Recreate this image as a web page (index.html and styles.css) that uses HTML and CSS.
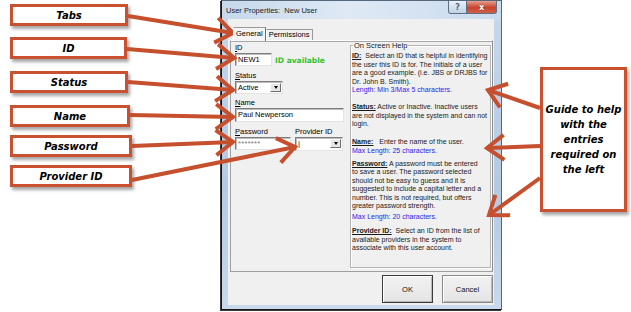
FILE: index.html
```html
<!DOCTYPE html>
<html lang="en">
<head>
    <meta charset="UTF-8">
    <title>User Properties</title>
    <link rel="stylesheet" href="styles.css">
</head>
<body>

    <div class="stage">

        <!-- Left call-outs -->
        <div class="callouts">
            <div class="callout c-tabs">Tabs</div>
            <div class="callout c-id">ID</div>
            <div class="callout c-status">Status</div>
            <div class="callout c-name">Name</div>
            <div class="callout c-pass">Password</div>
            <div class="callout c-prov">Provider ID</div>
        </div>

        <!-- The dialog -->
        <div class="window">
            <div class="titlebar">
                <span class="title">User Properties:&nbsp; New User</span>
                <div class="caption-btns">
                    <span class="cap-help">?</span>
                    <span class="cap-close">x</span>
                </div>
            </div>

            <div class="client">
                <div class="tabs">
                    <span class="tab active">General</span>
                    <span class="tab">Permissions</span>
                </div>

                <div class="panel">
                    <div class="form">
                        <div class="field">
                            <label><u>I</u>D</label>
                            <div class="row">
                                <div class="input id-input">NEW1</div>
                                <span class="avail">ID available</span>
                            </div>
                        </div>
                        <div class="field f-status">
                            <label><u>S</u>tatus</label>
                            <div class="select status-select">
                                <span class="value">Active</span>
                                <span class="drop"><i></i></span>
                            </div>
                        </div>
                        <div class="field f-name">
                            <label><u>N</u>ame</label>
                            <div class="input name-input">Paul Newperson</div>
                        </div>
                        <div class="row f-pass">
                            <div class="field">
                                <label><u>P</u>assword</label>
                                <div class="input pass-input">*******</div>
                            </div>
                            <div class="field prov-field">
                                <label>Provider ID</label>
                                <div class="select prov-select">
                                    <span class="value caret">|</span>
                                    <span class="drop"><i></i></span>
                                </div>
                            </div>
                        </div>
                    </div>

                    <fieldset class="help">
                        <legend>On Screen Help</legend>
                        <p class="p-id"><b>ID:</b>&nbsp; Select an ID that is helpful in identifying<br>the user this ID is for. The initials of a user<br>are a good example. (i.e. JBS or DRJBS for<br>Dr. John B. Smith).</p>
                        <p class="limit">Length: Min 3/Max 5 characters.</p>
                        <p class="p-status"><b>Status:</b> Active or Inactive. Inactive users<br>are not displayed in the system and can not<br>login.</p>
                        <p class="p-name"><b>Name:</b>&nbsp;&nbsp; Enter the name of the user.</p>
                        <p class="limit">Max Length: 25 characters.</p>
                        <p class="p-pass"><b>Password:</b> A password must be entered<br>to save a user. The password selected<br>should not be easy to guess and it is<br>suggested to include a capital letter and a<br>number. This is not required, but offers<br>greater password strength.</p>
                        <p class="limit l-pass">Max Length: 20 characters.</p>
                        <p class="p-prov"><b>Provider ID:</b>&nbsp; Select an ID from the list of<br>available providers in the system to<br>associate with this user account.</p>
                    </fieldset>
                </div>

                <div class="actions">
                    <button class="btn default">OK</button>
                    <button class="btn">Cancel</button>
                </div>
            </div>
        </div>

        <!-- Right call-out -->
        <div class="guide">Guide to help<br>with the<br>entries<br>required on<br>the left</div>

        <!-- Arrows drawn over everything -->
        <svg class="arrows" width="631" height="312" viewBox="0 0 631 312">
            <defs>
                <marker id="head" markerUnits="userSpaceOnUse" markerWidth="24" markerHeight="28"
                        viewBox="0 0 24 28" refX="20" refY="14" orient="auto" overflow="visible">
                    <path d="M3 1.5 L20 14 L3 26.5" fill="none" stroke="#c64f2d" stroke-width="4"/>
                </marker>
            </defs>
            <line x1="128" y1="16" x2="233" y2="33"/>
            <line x1="127" y1="49" x2="234" y2="58"/>
            <line x1="128" y1="82" x2="233" y2="90"/>
            <line x1="130" y1="115" x2="233" y2="117"/>
            <line x1="132" y1="146" x2="233" y2="142"/>
            <line x1="132" y1="180" x2="295" y2="147"/>
            <line x1="540" y1="108" x2="488" y2="90"/>
            <line x1="540" y1="146" x2="487" y2="148"/>
            <line x1="540" y1="178" x2="489" y2="215"/>
        </svg>

    </div>

</body>
</html>
```

FILE: styles.css
```css
/* Basic setup */
:root {
    --callout-red: #c9512f;
    --arrow-red: #c64f2d;
    --face: #f0f0f0;
    --help-blue: #1f1fe8;
}

* {
    box-sizing: border-box;
}

body {
    margin: 0;
    background: #ffffff;
    font-family: "Liberation Sans", Arial, sans-serif;
    color: #000;
}

.stage {
    position: relative;
    width: 631px;
    height: 312px;
    display: flex;
    align-items: flex-start;
    overflow: hidden;
}

/* Left call-out boxes */
.callouts {
    width: 221px;
    flex-shrink: 0;
    padding: 4px 0 0 10px;
    display: flex;
    flex-direction: column;
    align-items: flex-start;
}

.callout {
    height: 22px;
    border: 3px solid var(--callout-red);
    background: #fff;
    box-shadow: 2px 3px 3px rgba(0, 0, 0, 0.35);
    font: italic bold 10px "DejaVu Sans", sans-serif;
    display: flex;
    align-items: center;
    justify-content: center;
}

.c-tabs { width: 118px; }
.c-id { width: 117px; margin-top: 11px; }
.c-status { width: 118px; margin-top: 12px; }
.c-name { width: 120px; margin-top: 12px; }
.c-pass { width: 122px; margin-top: 8px; }
.c-prov { width: 122px; margin-top: 8px; }

/* Dialog window (Aero frame) */
.window {
    width: 281px;
    height: 310px;
    flex-shrink: 0;
    border: 1px solid #56687c;
    border-left-color: #151515;
    border-bottom-color: #151515;
    box-shadow: -1px 1px 0 #3a3a3a;
    background: linear-gradient(to bottom, #d7e4f2 0, #c4d6ea 22px, #b3cae3 60%, #c8d9ec 100%);
    display: flex;
    flex-direction: column;
    padding: 0 7px 4px 6px;
}

.titlebar {
    height: 18px;
    margin: 0 -7px 0 -6px;
    display: flex;
    justify-content: space-between;
    align-items: flex-start;
    background: linear-gradient(to right, #c6d8ec, #dfe9f5 45%, #c9dbee);
}

.title {
    font-size: 7.5px;
    margin: 5px 0 0 4px;
    color: #1b1b1b;
}

.caption-btns {
    display: flex;
    margin-right: 4px;
}

.cap-help,
.cap-close {
    height: 13px;
    display: flex;
    align-items: center;
    justify-content: center;
    font: bold 8px "DejaVu Sans", sans-serif;
    border: 1px solid #5f6f82;
    border-top: none;
}

.cap-help {
    width: 19px;
    border-radius: 0 0 0 3px;
    background: linear-gradient(#e9f0f8, #c2d3e6);
    color: #53667b;
}

.cap-close {
    width: 30px;
    border-left: none;
    border-radius: 0 0 3px 0;
    background: linear-gradient(#e4a08f, #c9432d 55%, #d0604a);
    color: #fff;
    text-shadow: 0 0 1px #3a1a12;
}

/* Client area */
.client {
    flex: 1;
    background: var(--face);
    display: flex;
    flex-direction: column;
    padding: 8px 1px 0 2px;
}

.tabs {
    display: flex;
    align-items: flex-end;
    height: 13px;
    margin-left: 3px;
    position: relative;
    z-index: 1;
}

.tab {
    font-size: 7.5px;
    height: 11px;
    line-height: 10px;
    padding: 0 2px;
    border: 1px solid #9a9a9a;
    border-bottom: none;
    border-left-color: #fff;
    background: var(--face);
}

.tab.active {
    height: 14px;
    line-height: 12px;
    margin-bottom: -1px;
    background: #f4f4f4;
    border-right-color: #6e6e6e;
}

.panel {
    flex: 1;
    display: flex;
    border: 1px solid #a0a0a0;
    border-top-color: #fff;
    border-right-color: #8c8c8c;
    box-shadow: inset 0 1px 0 #a8a8a8;
}

/* Form column */
.form {
    width: 109px;
    margin-left: 4px;
    padding-top: 3px;
}

.field label {
    display: block;
    height: 8px;
    line-height: 8px;
    font-size: 7.5px;
}

.field u,
.help b {
    text-decoration: underline;
}

.row {
    display: flex;
    align-items: center;
}

.f-status { margin-top: 6px; }
.f-name { margin-top: 5px; }
.f-pass { margin-top: 6px; align-items: flex-start; }

.input,
.select {
    margin-top: 1px;
    height: 13px;
    background: #fff;
    border: 1px solid;
    border-color: #7d7d7d #e3e3e3 #e3e3e3 #7d7d7d;
    box-shadow: inset 1px 1px 0 #bdbdbd;
    font-size: 7.5px;
    line-height: 11px;
    padding-left: 2px;
    white-space: nowrap;
}

.id-input { width: 37px; }
.name-input { width: 109px; height: 14px; }
.pass-input { width: 56px; color: #777; letter-spacing: 0.3px; }

.avail {
    margin: 2px 0 0 3px;
    font: bold 7.5px "DejaVu Sans", sans-serif;
    color: #2fc12f;
}

.select {
    display: flex;
    justify-content: space-between;
    padding-right: 1px;
}

.status-select { width: 48px; }
.prov-field { margin-left: 4px; }
.prov-select { width: 48px; height: 14px; }

.caret {
    font-size: 8px;
    color: #222;
}

.drop {
    width: 11px;
    height: 9px;
    margin-top: 1px;
    background: #e6e6e6;
    border: 1px solid;
    border-color: #fff #6f6f6f #6f6f6f #fff;
    display: flex;
    align-items: center;
    justify-content: center;
}

.drop i {
    width: 0;
    height: 0;
    border-left: 2.5px solid transparent;
    border-right: 2.5px solid transparent;
    border-top: 3px solid #000;
}

/* On Screen Help group box */
.help {
    width: 141px;
    margin: 0 1px 3px 6px;
    padding: 0 0 0 1px;
    border: 1px solid #b4b4b4;
    box-shadow: inset 1px 1px 0 #fff, 1px 1px 0 #fff;
    min-width: 0;
}

.help legend {
    font-size: 7.5px;
    line-height: 9px;
    padding: 0 1px;
    margin-left: 1px;
    color: #222;
}

.help p {
    margin: 0;
    font-size: 7px;
    line-height: 8.5px;
    white-space: nowrap;
    color: #1a1a1a;
}

.help .limit {
    color: var(--help-blue);
}

.p-id { margin-top: 2px !important; }
.p-status { margin-top: 8.5px !important; }
.p-name { margin-top: 9.5px !important; }
.p-pass { margin-top: 4.5px !important; }
.l-pass { margin-top: 2.5px !important; }
.p-prov { margin-top: 5.5px !important; }

/* OK / Cancel */
.actions {
    height: 33px;
    display: flex;
    justify-content: flex-end;
    align-items: flex-start;
    gap: 9px;
    padding-top: 3px;
}

.btn {
    width: 51px;
    height: 28px;
    padding: 0;
    font: 7.5px "Liberation Sans", Arial, sans-serif;
    color: #111;
    background: linear-gradient(#f2f2f2, #e4e4e4);
    border: 1px solid #8a8a8a;
    box-shadow: inset 1px 1px 0 #fff, inset -1px -1px 0 #b8b8b8;
}

.btn.default {
    border-color: #3a3a3a;
}

/* Right call-out */
.guide {
    width: 87px;
    height: 145px;
    margin: 67px 0 0 38px;
    flex-shrink: 0;
    border: 3px solid var(--callout-red);
    background: #fff;
    box-shadow: 2px 3px 3px rgba(0, 0, 0, 0.35);
    display: flex;
    align-items: center;
    justify-content: center;
    text-align: center;
    font: italic bold 10px "DejaVu Sans", sans-serif;
    line-height: 15px;
}

/* Arrow overlay */
.arrows {
    position: absolute;
    left: 0;
    top: 0;
    pointer-events: none;
}

.arrows line {
    stroke: var(--arrow-red);
    stroke-width: 4;
    marker-end: url(#head);
}
```
